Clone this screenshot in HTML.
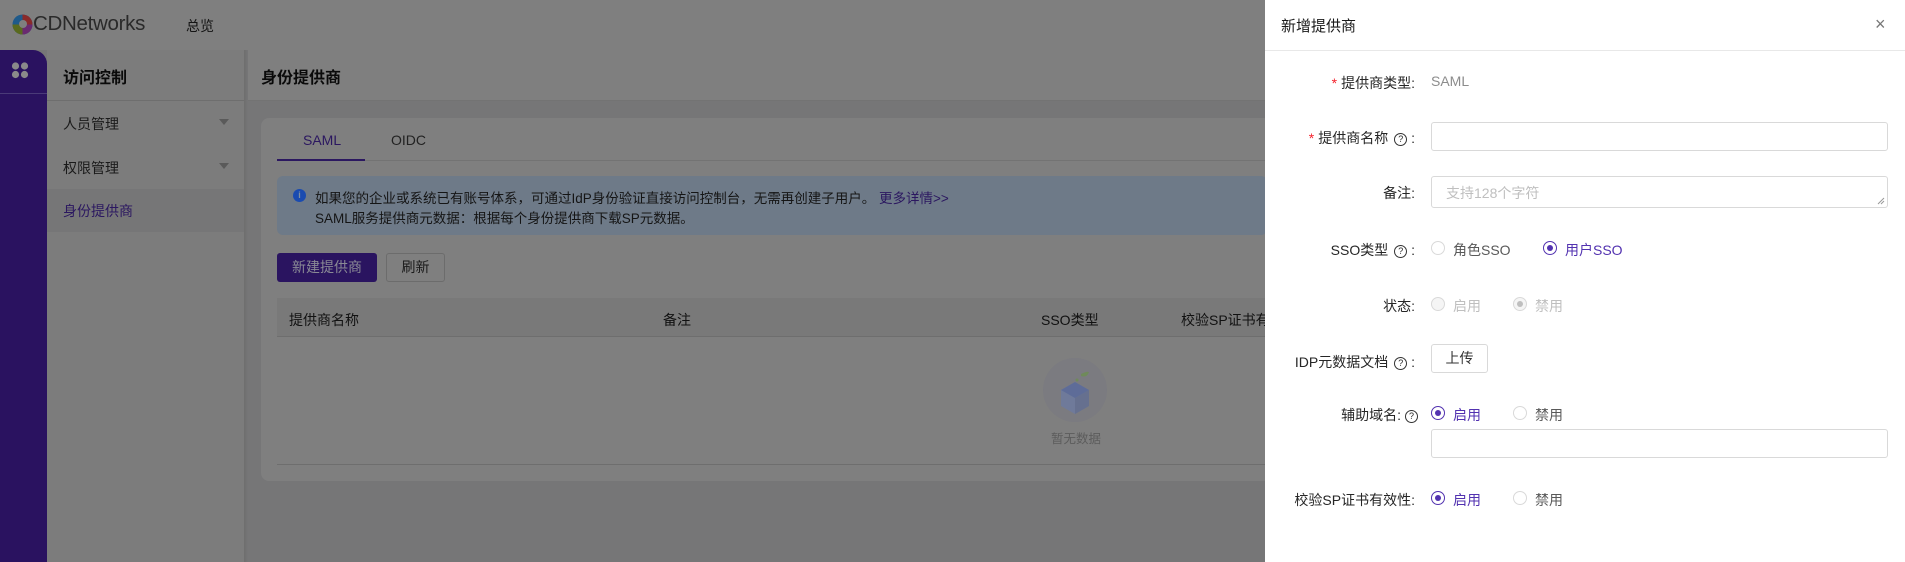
<!DOCTYPE html>
<html><head><meta charset="utf-8"><style>
*{margin:0;padding:0;box-sizing:border-box}
body{width:1905px;height:562px;overflow:hidden;position:relative;background:#767677;font-family:"Liberation Sans","Noto Sans CJK SC",sans-serif;font-size:14px;color:#141414}
.a{position:absolute;white-space:nowrap}
.radio{position:absolute;width:14px;height:14px;border:1px solid #d9d9d9;border-radius:50%;background:#fff}
.radio.on{border-color:#5232b0}
.radio.on::after{content:"";position:absolute;left:3px;top:3px;width:6px;height:6px;border-radius:50%;background:#5232b0}
.radio.dis{background:#f5f5f5}
.radio.dison::after{content:"";position:absolute;left:3px;top:3px;width:6px;height:6px;border-radius:50%;background:#bfbfbf}
.q{display:inline-block;width:13px;height:13px;border:1px solid #333;border-radius:50%;font-size:9px;line-height:11px;text-align:center;vertical-align:1px;margin-left:6px}
.lbl{position:absolute;right:490px;text-align:right;white-space:nowrap;color:#262626}
.inp{position:absolute;left:1431px;width:457px;border:1px solid #d9d9d9;border-radius:3px;background:#fff}
</style></head><body>
<div class="a" style="left:0;top:0;width:1265px;height:50px;background:#7f7f7f"></div>
<svg class="a" style="left:12px;top:14px" width="21" height="21" viewBox="0 0 21 21"><circle cx="10.5" cy="10.5" r="10" fill="#1f5a8a"/><path d="M10.5 .5A10 10 0 0 1 20.5 10.5L10.5 10.5Z" fill="#8a2a2a"/><path d="M.5 10.5A10 10 0 0 0 10.5 20.5L10.5 10.5Z" fill="#5a6a1e"/><path d="M10.5 20.5A10 10 0 0 0 20.5 10.5L10.5 10.5Z" fill="#6a2a70"/><circle cx="11" cy="10" r="4" fill="#7f7f7f"/></svg>
<div class="a" style="left:33px;top:12px;font-size:20.5px;color:#2a2a2a;letter-spacing:-0.3px">CDNetworks</div>
<div class="a" style="left:186px;top:16px;font-size:14px;color:#141414">总览</div>
<div class="a" style="left:0;top:50px;width:47px;height:512px;background:#2a1260;border-top-right-radius:14px"></div>
<div class="a" style="left:0;top:93px;width:47px;height:1px;background:#4a3a78"></div>
<svg class="a" style="left:11px;top:62px" width="18" height="17"><circle cx="4.5" cy="4" r="3.6" fill="#8a8a8a"/><circle cx="13.5" cy="4" r="3.6" fill="#8a8a8a"/><circle cx="4.5" cy="12.5" r="3.6" fill="#8a8a8a"/><circle cx="13.5" cy="12.5" r="3.6" fill="#8a8a8a"/></svg>
<div class="a" style="left:47px;top:50px;width:197px;height:512px;background:#7c7c7c"></div>
<div class="a" style="left:244px;top:50px;width:4px;height:512px;background:linear-gradient(90deg,#6e6e6e,#767677)"></div>
<div class="a" style="left:63px;top:64px;font-size:16px;font-weight:bold;color:#0a0a0a">访问控制</div>
<div class="a" style="left:47px;top:100px;width:197px;height:1px;background:#6e6e6e"></div>
<div class="a" style="left:63px;top:114px;color:#1a1a1a">人员管理</div>
<div class="a" style="left:219px;top:119px;border:5px solid transparent;border-top:6px solid #5a5a5a"></div>
<div class="a" style="left:63px;top:158px;color:#1a1a1a">权限管理</div>
<div class="a" style="left:219px;top:163px;border:5px solid transparent;border-top:6px solid #5a5a5a"></div>
<div class="a" style="left:47px;top:189px;width:197px;height:43px;background:#767677"></div>
<div class="a" style="left:63px;top:201px;color:#2b1760">身份提供商</div>
<div class="a" style="left:248px;top:50px;width:1017px;height:51px;background:#7f7f7f;border-bottom:1px solid #737373"></div>
<div class="a" style="left:261px;top:64px;font-size:16px;font-weight:bold;color:#0a0a0a">身份提供商</div>
<div class="a" style="left:261px;top:118px;width:1010px;height:363px;background:#7f7f7f;border-radius:8px"></div>
<div class="a" style="left:303px;top:132px;color:#2b1760">SAML</div>
<div class="a" style="left:391px;top:132px;color:#222">OIDC</div>
<div class="a" style="left:277px;top:160px;width:990px;height:1px;background:#737373"></div>
<div class="a" style="left:277px;top:159px;width:88px;height:2px;background:#2b1760"></div>
<div class="a" style="left:277px;top:176px;width:990px;height:59px;background:#6e7a88;border-radius:6px"></div>
<div class="a" style="left:293px;top:189px;width:13px;height:13px;border-radius:50%;background:#1a4bb0;color:#7f8fa0;font-size:9px;line-height:13px;text-align:center;font-weight:bold">i</div>
<div class="a" style="left:315px;top:187px;font-size:13.5px;color:#151515">如果您的企业或系统已有账号体系，可通过IdP身份验证直接访问控制台，无需再创建子用户。 <span style="color:#2b1760">更多详情&gt;&gt;</span></div>
<div class="a" style="left:315px;top:207px;font-size:13.5px;color:#151515">SAML服务提供商元数据：根据每个身份提供商下载SP元数据。</div>
<div class="a" style="left:277px;top:253px;width:100px;height:29px;background:#2a1460;border-radius:3px;color:#8a8a95;font-size:14px;line-height:29px;text-align:center">新建提供商</div>
<div class="a" style="left:386px;top:253px;width:59px;height:29px;border:1px solid #6c6c6c;border-radius:3px;color:#1a1a1a;font-size:14px;line-height:27px;text-align:center">刷新</div>
<div class="a" style="left:277px;top:298px;width:990px;height:39px;background:#797979;border-bottom:1px solid #6e6e6e"></div>
<div class="a" style="left:289px;top:310px;color:#111">提供商名称</div>
<div class="a" style="left:663px;top:310px;color:#111">备注</div>
<div class="a" style="left:1041px;top:310px;color:#111">SSO类型</div>
<div class="a" style="left:1181px;top:310px;color:#111">校验SP证书有</div>
<div class="a" style="left:1043px;top:358px;width:64px;height:64px;border-radius:50%;background:#7b7b80"></div>
<svg class="a" style="left:1055px;top:368px" width="40" height="48" viewBox="0 0 40 48"><path d="M20 14 L34 22 L34 38 L20 46 L6 38 L6 22 Z" fill="#6f7a9a"/><path d="M6 22 L20 30 L34 22 L20 14Z" fill="#5e6c98"/><path d="M20 30 L20 46 L34 38 L34 22Z" fill="#66708f"/><path d="M26 6 q6-3 8-2 q-2 6-8 4z" fill="#6f8a5a"/><circle cx="22" cy="12" r="1.5" fill="#6f8a5a"/></svg>
<div class="a" style="left:1051px;top:428px;font-size:12.5px;color:#5c5c5c">暂无数据</div>
<div class="a" style="left:277px;top:464px;width:990px;height:1px;background:#6e6e6e"></div>
<div class="a" style="left:1265px;top:0;width:640px;height:562px;background:#fff"></div>
<div class="a" style="left:1265px;top:50px;width:640px;height:1px;background:#e8e8e8"></div>
<div class="a" style="left:1281px;top:15px;font-size:15px;color:#1a1a1a">新增提供商</div>
<div class="a" style="left:1875px;top:14px;font-size:18px;color:#777">×</div>

<div class="lbl" style="top:73px"><span style="color:#f5222d;margin-right:4px">*</span>提供商类型:</div>
<div class="a" style="left:1431px;top:73px;color:#8c8c8c">SAML</div>

<div class="lbl" style="top:128px"><span style="color:#f5222d;margin-right:4px">*</span>提供商名称<span class="q">?</span> :</div>
<div class="inp" style="top:122px;height:29px"></div>

<div class="lbl" style="top:183px">备注:</div>
<div class="inp" style="top:176px;height:32px"></div>
<div class="a" style="left:1446px;top:183px;color:#bfbfbf">支持128个字符</div>
<svg class="a" style="left:1877px;top:197px" width="8" height="8"><path d="M1 7L7 1M4 7L7 4" stroke="#999" stroke-width="1"/></svg>

<div class="lbl" style="top:240px">SSO类型<span class="q">?</span> :</div>
<div class="radio" style="left:1431px;top:241px"></div><div class="a" style="left:1453px;top:240px;color:#595959">角色SSO</div>
<div class="radio on" style="left:1543px;top:241px"></div><div class="a" style="left:1565px;top:240px;color:#5232b0">用户SSO</div>

<div class="lbl" style="top:296px">状态:</div>
<div class="radio dis" style="left:1431px;top:297px"></div><div class="a" style="left:1453px;top:296px;color:#bfbfbf">启用</div>
<div class="radio dis dison" style="left:1513px;top:297px"></div><div class="a" style="left:1535px;top:296px;color:#bfbfbf">禁用</div>

<div class="lbl" style="top:352px">IDP元数据文档<span class="q">?</span> :</div>
<div class="a" style="left:1431px;top:344px;width:57px;height:29px;border:1px solid #d9d9d9;border-radius:3px;text-align:center;line-height:27px;color:#333">上传</div>

<div class="lbl" style="top:405px;right:487px">辅助域名:<span class="q" style="margin-left:4px">?</span></div>
<div class="radio on" style="left:1431px;top:406px"></div><div class="a" style="left:1453px;top:405px;color:#5232b0">启用</div>
<div class="radio" style="left:1513px;top:406px"></div><div class="a" style="left:1535px;top:405px;color:#595959">禁用</div>
<div class="inp" style="top:429px;height:29px"></div>

<div class="lbl" style="top:490px">校验SP证书有效性:</div>
<div class="radio on" style="left:1431px;top:491px"></div><div class="a" style="left:1453px;top:490px;color:#5232b0">启用</div>
<div class="radio" style="left:1513px;top:491px"></div><div class="a" style="left:1535px;top:490px;color:#595959">禁用</div>
</body></html>
